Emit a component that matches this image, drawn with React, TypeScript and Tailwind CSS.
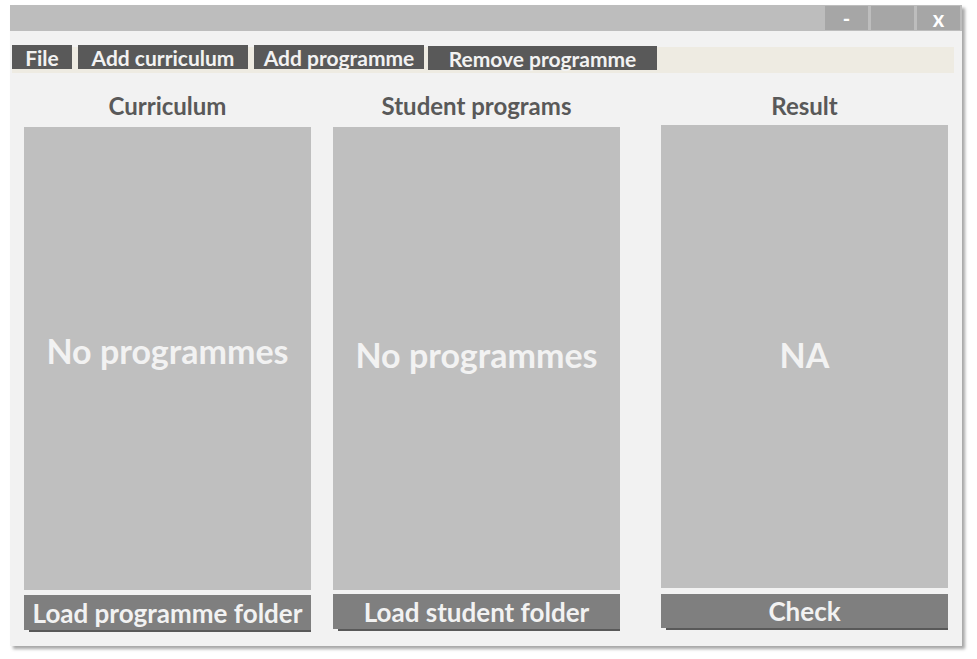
const font = { fontFamily: "Lato, 'Open Sans', sans-serif" };

function MenuButton({ label, w, extra = "" }: { label: string; w: string; extra?: string }) {
  return (
    <button
      className={`h-[24px] ${w} ${extra} bg-[#595959] text-[#f2f2f2] text-[21px] font-bold leading-none flex items-center justify-center`}
    >
      {label}
    </button>
  );
}

function Column({
  title,
  empty,
  action,
  head = "h-[44px] pt-[2px]",
  panel = "",
  gap = "mt-[5px]",
  btn = "h-[35px]",
}: {
  title: string;
  empty: string;
  action: string;
  head?: string;
  panel?: string;
  gap?: string;
  btn?: string;
}) {
  return (
    <div className="flex flex-col w-[287px]">
      <div className={`${head} flex items-center justify-center text-[24px] font-bold text-[#595959]`}>
        {title}
      </div>
      <div className={`h-[463px] bg-[#bfbfbf] flex items-center justify-center text-[34px] font-bold text-[#f2f2f2] ${panel}`}>
        {empty}
      </div>
      <div className={`${gap} flex flex-col`}>
        <button className={`${btn} bg-[#7f7f7f] text-[#f2f2f2] text-[26px] font-bold leading-none flex items-center justify-center`}>
          {action}
        </button>
        <div className="h-[2px] ml-[5px] bg-[#595959]" />
      </div>
    </div>
  );
}

export default function App() {
  return (
    <div className="w-[977px] h-[659px] bg-white pl-[10px] pt-[5px]" style={font}>
      <div className="w-[952px] h-[641px] bg-[#f2f2f2] shadow-[3px_3px_3px_rgba(0,0,0,0.35)] flex flex-col">
        {/* title bar */}
        <div className="h-[26px] bg-[#bdbdbd] flex justify-end items-start pt-[1px] pr-[2px] gap-[3px]">
          <button className="w-[43px] h-[24px] bg-[#a6a6a6] text-white font-bold text-[20px] leading-none flex items-center justify-center">
            -
          </button>
          <button className="w-[43px] h-[24px] bg-[#a6a6a6]" />
          <button className="w-[43px] h-[24px] bg-[#a6a6a6] text-white font-bold text-[22px] leading-none flex items-center justify-center pt-[2px]">
            x
          </button>
        </div>

        {/* menu */}
        <div className="mt-[16px] ml-[2px] mr-[8px] h-[26px] bg-[#eeebe2] flex items-start gap-[6px]">
          <MenuButton label="File" w="w-[60px]" extra="-mt-[2px]" />
          <MenuButton label="Add curriculum" w="w-[170px]" extra="-mt-[2px]" />
          <MenuButton label="Add programme" w="w-[170px]" extra="-mt-[2px]" />
          <MenuButton label="Remove programme" w="w-[229px]" extra="-mt-[1px] -ml-[2px]" />
        </div>

        {/* columns */}
        <div className="flex items-start pl-[14px] mt-[10px]">
          <Column title="Curriculum" empty="No programmes" action="Load programme folder" panel="pb-[16px]" />
          <div className="ml-[22px]">
            <Column
              title="Student programs"
              empty="No programmes"
              action="Load student folder"
              panel="pb-[8px]"
              gap="mt-[4px]"
            />
          </div>
          <div className="ml-[41px]">
            <Column
              title="Result"
              empty="NA"
              action="Check"
              head="h-[42px] pt-[4px]"
              panel="pb-[4px]"
              gap="mt-[6px]"
              btn="h-[34px]"
            />
          </div>
        </div>
      </div>
    </div>
  );
}
